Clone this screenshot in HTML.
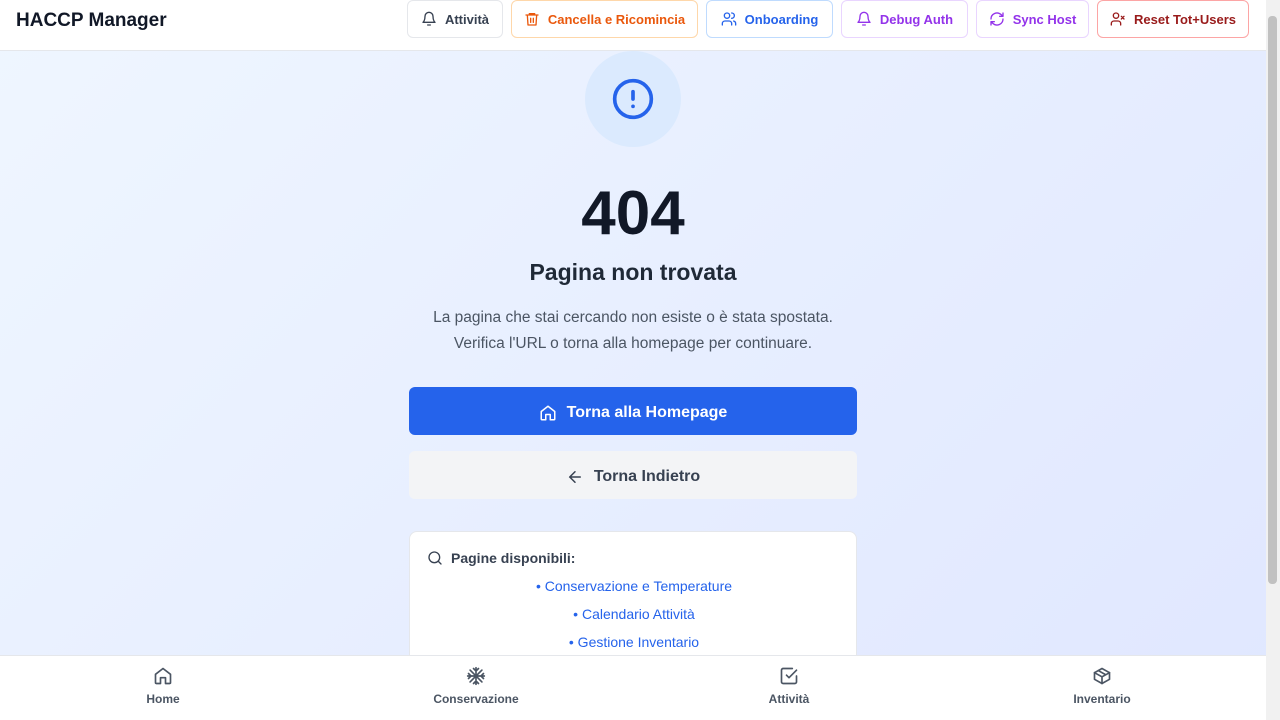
<!DOCTYPE html>
<html><head><meta charset="utf-8"><style>
*{box-sizing:border-box;margin:0;padding:0}
body{width:1280px;height:720px;overflow:hidden;font-family:"Liberation Sans",sans-serif;position:relative;background:#fff}
.main{position:absolute;left:0;top:0;width:1266px;height:720px;background:linear-gradient(135deg,#eff6ff,#e0e7ff)}
.hdr{position:absolute;left:0;top:0;width:1266px;height:51px;background:#fff;border-bottom:1px solid #e5e7eb}
.logo{position:absolute;left:16px;top:10px;font-size:19px;font-weight:bold;color:#111827}
.btn{position:absolute;top:0;height:38px;border:1px solid;border-radius:6px;display:flex;align-items:center;justify-content:center;gap:8px;font-size:13px;font-weight:bold;background:#fff;white-space:nowrap}
.btn svg{width:16px;height:16px;fill:none;stroke:currentColor;stroke-width:2;stroke-linecap:round;stroke-linejoin:round}
.sb{position:absolute;left:1266px;top:0;width:14px;height:720px;background:#f1f1f1}
.sb div{position:absolute;left:2px;top:16px;width:9px;height:568px;background:#c1c1c1;border-radius:4px}
.circ{position:absolute;left:585px;top:51px;width:96px;height:96px;border-radius:50%;background:#dbeafe;display:flex;align-items:center;justify-content:center}
.c{position:absolute;left:0;width:1266px;text-align:center}
.b1{position:absolute;left:409px;top:387px;width:448px;height:48px;padding-top:4px;background:#2563eb;border-radius:6px;color:#fff;font-weight:bold;font-size:16px;display:flex;align-items:center;justify-content:center;gap:10px}
.b2{position:absolute;left:409px;top:451px;width:448px;height:48px;padding-top:4px;background:#f3f4f6;border-radius:6px;color:#374151;font-weight:bold;font-size:16px;display:flex;align-items:center;justify-content:center;gap:10px}
.card{position:absolute;left:409px;top:531px;width:448px;height:160px;background:#fff;border:1px solid #e5e7eb;border-radius:8px}
.lnk{position:absolute;left:0;width:448px;text-align:center;color:#2563eb;font-size:14px}
.nav{position:absolute;left:0;top:655px;width:1266px;height:65px;background:#fff;border-top:1px solid #e5e7eb}
.ni{position:absolute;top:10px;width:200px;text-align:center;font-size:12px;font-weight:bold;color:#4b5563}
.ni svg{display:block;margin:0 auto 6px;width:20px;height:20px;fill:none;stroke:#4b5563;stroke-width:2;stroke-linecap:round;stroke-linejoin:round}
</style></head><body>
<div class="main"></div>
<div class="circ"><svg width="44" height="44" viewBox="0 0 24 24" fill="none" stroke="#2563eb" stroke-width="2" stroke-linecap="round"><circle cx="12" cy="12" r="10"/><path d="M12 8v4M12 16h.01"/></svg></div>
<div class="c" style="top:178px;font-size:62px;font-weight:bold;color:#111827;line-height:72px">404</div>
<div class="c" style="top:259px;font-size:23px;font-weight:bold;color:#1f2937">Pagina non trovata</div>
<div class="c" style="top:305px;font-size:15.5px;color:#4b5563;line-height:26px">La pagina che stai cercando non esiste o è stata spostata.<br>Verifica l'URL o torna alla homepage per continuare.</div>
<div class="b1"><svg width="18" height="18" viewBox="0 0 24 24" fill="none" stroke="#fff" stroke-width="2" stroke-linejoin="round"><path d="M3 10l9-7 9 7v10a1 1 0 0 1-1 1h-5v-7h-6v7H4a1 1 0 0 1-1-1z"/></svg>Torna alla Homepage</div>
<div class="b2"><svg width="18" height="18" viewBox="0 0 24 24" fill="none" stroke="#374151" stroke-width="2" stroke-linecap="round"><path d="M19 12H5M12 19l-7-7 7-7"/></svg>Torna Indietro</div>
<div class="card">
<div style="position:absolute;left:17px;top:18px;font-size:14px;font-weight:bold;color:#374151;display:flex;gap:8px;align-items:center"><svg width="16" height="16" viewBox="0 0 24 24" fill="none" stroke="#374151" stroke-width="2" stroke-linecap="round"><circle cx="11" cy="11" r="8"/><path d="M21 21l-4.3-4.3"/></svg>Pagine disponibili:</div>
<div class="lnk" style="top:46px">• Conservazione e Temperature</div>
<div class="lnk" style="top:74px">• Calendario Attività</div>
<div class="lnk" style="top:102px">• Gestione Inventario</div>
</div>
<div class="hdr"><div class="logo">HACCP Manager</div></div>
<div class="btn" style="left:407px;width:96px;top:0;border-color:#e5e7eb;color:#374151"><svg viewBox="0 0 24 24"><path d="M6 8a6 6 0 0 1 12 0c0 7 3 9 3 9H3s3-2 3-9M10 21h4"/></svg>Attività</div>
<div class="btn" style="left:511px;width:187px;border-color:#fed7aa;color:#ea580c"><svg viewBox="0 0 24 24"><path d="M3 6h18M8 6V4h8v2M5 6l1 15h12l1-15M10 11v6M14 11v6"/></svg>Cancella e Ricomincia</div>
<div class="btn" style="left:706px;width:127px;border-color:#bfdbfe;color:#2563eb"><svg viewBox="0 0 24 24"><circle cx="9" cy="7" r="4"/><path d="M2 21v-2a4 4 0 0 1 4-4h6a4 4 0 0 1 4 4v2M16 3a4 4 0 0 1 0 8M22 21v-2a4 4 0 0 0-3-3.9"/></svg>Onboarding</div>
<div class="btn" style="left:841px;width:127px;border-color:#e9d5ff;color:#9333ea"><svg viewBox="0 0 24 24"><path d="M6 8a6 6 0 0 1 12 0c0 7 3 9 3 9H3s3-2 3-9M10 21h4"/></svg>Debug Auth</div>
<div class="btn" style="left:976px;width:113px;border-color:#e9d5ff;color:#9333ea"><svg viewBox="0 0 24 24"><path d="M21 12a9 9 0 0 1-15 6.7L3 16M3 12a9 9 0 0 1 15-6.7L21 8M21 3v5h-5M3 21v-5h5"/></svg>Sync Host</div>
<div class="btn" style="left:1097px;width:152px;border-color:#fca5a5;color:#991b1b"><svg viewBox="0 0 24 24"><circle cx="9" cy="7" r="4"/><path d="M2 21v-2a4 4 0 0 1 4-4h6a4 4 0 0 1 4 4v2M17 8l4 4M21 8l-4 4"/></svg>Reset Tot+Users</div>
<div class="nav">
<div class="ni" style="left:63px"><svg viewBox="0 0 24 24"><path d="M3 10l9-7 9 7v10a1 1 0 0 1-1 1h-5v-7h-6v7H4a1 1 0 0 1-1-1z"/></svg>Home</div>
<div class="ni" style="left:376px"><svg viewBox="0 0 24 24"><path d="M12 2v20M2 12h20M4.9 4.9l14.2 14.2M19.1 4.9L4.9 19.1M9 3l3 3 3-3M9 21l3-3 3 3M3 9l3 3-3 3M21 9l-3 3 3 3"/></svg>Conservazione</div>
<div class="ni" style="left:689px"><svg viewBox="0 0 24 24"><path d="M9 11l3 3 9-9"/><path d="M21 12v7a2 2 0 0 1-2 2H5a2 2 0 0 1-2-2V5a2 2 0 0 1 2-2h11"/></svg>Attività</div>
<div class="ni" style="left:1002px"><svg viewBox="0 0 24 24"><path d="M21 8l-9-5-9 5v8l9 5 9-5z"/><path d="M3 8l9 5 9-5M12 13v8M7.5 5.5l9 5"/></svg>Inventario</div>
</div>
<div class="sb"><div></div></div>
</body></html>
